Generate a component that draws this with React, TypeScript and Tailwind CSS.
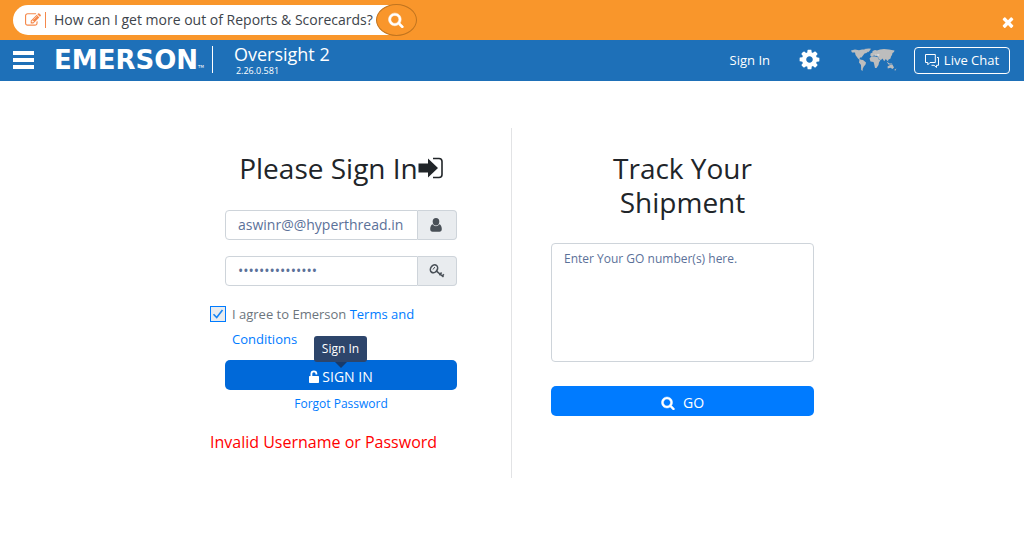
import React from "react";

const FA_SEARCH =
  "M1216 832q0-185-131.5-316.5t-316.5-131.5-316.5 131.5-131.5 316.5 131.5 316.5 316.5 131.5 316.5-131.5 131.5-316.5zm512 832q0 52-38 90t-90 38q-54 0-90-38l-343-342q-179 124-399 124-143 0-273.5-55.5t-225-150-150-225-55.5-273.5 55.5-273.5 150-225 225-150 273.5-55.5 273.5 55.5 225 150 150 225 55.5 273.5q0 220-124 399l343 343q37 37 37 90z";
const FA_TIMES =
  "M1490 1322q0 40-28 68l-136 136q-28 28-68 28t-68-28l-294-294-294 294q-28 28-68 28t-68-28l-136-136q-28-28-28-68t28-68l294-294-294-294q-28-28-28-68t28-68l136-136q28-28 68-28t68 28l294 294 294-294q28-28 68-28t68 28l136 136q28 28 28 68t-28 68l-294 294 294 294q28 28 28 68z";
const FA_COG =
  "M1152 896q0-106-75-181t-181-75-181 75-75 181 75 181 181 75 181-75 75-181zm512-109v222q0 12-8 23t-20 13l-185 28q-19 54-39 91 35 50 107 138 10 12 10 25t-9 23q-27 37-99 108t-94 71q-12 0-26-9l-138-108q-44 23-91 38-16 136-29 186-7 28-36 28h-222q-14 0-24.5-8.5t-11.5-21.5l-28-184q-49-16-90-37l-141 107q-10 9-25 9-14 0-25-11-126-114-165-168-7-10-7-23 0-12 8-23 15-21 51-66.5t54-70.5q-27-50-41-99l-183-27q-13-2-21-12.5t-8-23.5v-222q0-12 8-23t19-13l186-28q14-46 39-92-40-57-107-138-10-12-10-24 0-10 9-23 26-36 98.5-107.5t94.5-71.5q13 0 26 10l138 107q44-23 91-38 16-136 29-186 7-28 36-28h222q14 0 24.5 8.5t11.5 21.5l28 184q49 16 90 37l142-107q9-9 24-9 13 0 25 10 129 119 165 170 7 8 7 22 0 12-8 23-15 21-51 66.5t-54 70.5q26 50 41 98l183 28q13 2 21 12.5t8 23.5z";
const FA_EDIT =
  "M888 1184l116-116-152-152-116 116v56h96v96h56zm440-720q-16-16-33 1l-350 350q-17 17-1 33t33-1l350-350q17-17 1-33zm80 594v190q0 119-84.5 203.5t-203.5 84.5h-832q-119 0-203.5-84.5t-84.5-203.5v-832q0-119 84.5-203.5t203.5-84.5h832q63 0 117 25 15 7 18 23 3 17-9 29l-49 49q-14 14-32 8-23-6-45-6h-832q-66 0-113 47t-47 113v832q0 66 47 113t113 47h832q66 0 113-47t47-113v-126q0-13 9-22l64-64q15-15 35-7t20 29zm-96-738l288 288-672 672h-288v-288zm444 132l-92 92-288-288 92-92q28-28 68-28t68 28l152 152q28 28 28 68t-28 68z";

function Glyph({ d, className }: { d: string; className: string }) {
  return (
    <svg viewBox="0 0 1792 1792" className={className} fill="currentColor" aria-hidden="true">
      <path d={d} />
    </svg>
  );
}

function WorldMap() {
  return (
    <svg viewBox="0 0 46 24" className="h-6 w-[46px]" fill="#bdbdbd" aria-hidden="true">
      <path d="M0 2.500 4 1.600 8 2.200 11 1.600 15 1.500 17 3 15.500 5 13.500 5.500 12 7.500 10.500 9.500 9 9.500 8.500 11 10.500 12.500 9.500 12.500 7 10.500 4.500 7 4 4.500 1 4.500z" />
      <path d="M13 1 18 .4 20 .8 18.500 3 16.800 4.500 16 3z" />
      <path d="M8.500 11.500 12 12 15 14.500 14.500 16.500 12.800 18.500 11.800 20.500 11.500 23 10.200 22 10 17 8 14.500z" />
      <path d="M18.500 10.500 20.500 8.300 24 8.400 27 9.300 28 12 29.500 12 28 14.500 27.500 17 25.500 20 24 20 23 15.500 22.500 14 19.500 13.500z" />
      <path d="M19.300 7.800 19.500 5.500 21.500 4.500 21.500 3 24 2 26 2.600 29 1.600 33 1 38 1.600 43.500 2.400 43 4 41.500 5 41 7 40 8.500 39.500 10.500 37 12 37.500 13.500 36 12.500 34.800 11 33.200 13.300 31.500 10.500 30 12 28 11.500 27 8.800 25 7.800 23 7.500 21 8.500z" />
      <path d="M35.500 13.500 38.500 15.500 41 15.500 41.500 16.500 37.500 16.500z" />
      <path d="M36.500 18.500 39 17 41.500 16.800 43 19.500 41.500 21 39.500 19.800 36.800 20.500zM43.500 21.500 45.500 20.500 44 23z" />
      <path d="M23.500 7 25.500 6.500 25 7.600zM26 6.600 28.500 6.400 28 7.600 26.400 7.500z" fill="#f1f1f1" />
    </svg>
  );
}

const inputClass =
  "h-[30px] w-full min-w-0 flex-1 rounded-l border border-[#ced4da] bg-white px-3 pb-0.5 text-sm text-[#5b7199] outline-none placeholder:text-[#6c757d]";
const addonClass =
  "flex h-[30px] w-[39px] items-center justify-center rounded-r border border-l-0 border-[#ced4da] bg-[#e9ecef] pr-0.5 text-[#495057]";

export default function App() {
  return (
    <div className="min-h-screen bg-white font-['Open_Sans','Noto_Sans',sans-serif] text-[#212529]">
      <div className="flex h-10 items-center justify-between bg-[#f9962b] pr-2 pl-[13px]">
        <form className="flex items-center" onSubmit={(e) => e.preventDefault()}>
          <div className="flex h-[30px] w-[383px] items-center rounded-l-full bg-white pl-3 text-[#f5894c]">
            <Glyph d={FA_EDIT} className="h-4 w-4" />
            <span className="ml-1 h-4 w-px bg-[#f5894c]" />
            <input
              aria-label="Search help"
              defaultValue="How can I get more out of Reports & Scorecards?"
              className="ml-2 w-[328px] bg-transparent text-sm text-[#3d444b] outline-none"
            />
          </div>
          <button
            type="submit"
            aria-label="Search"
            className="-ml-5 flex h-8 w-[41px] items-center justify-center rounded-[50%] border border-[#c0741f] bg-[#f9962b] pr-0.5 text-white"
          >
            <Glyph d={FA_SEARCH} className="h-4 w-4 stroke-current stroke-[60]" />
          </button>
        </form>
        <button type="button" aria-label="Close" className="mt-1 text-white">
          <Glyph d={FA_TIMES} className="h-4 w-4" />
        </button>
      </div>

      <header className="flex h-[41px] items-center bg-[#1e70b8] pr-[14px] pl-[13px] pb-0.5 text-white">
        <button type="button" aria-label="Menu" className="flex w-[21px] flex-col gap-[3px]">
          <span className="h-[4px] w-full bg-white" />
          <span className="h-[4px] w-full bg-white" />
          <span className="h-[4px] w-full bg-white" />
        </button>
        <a href="#home" className="ml-5 flex items-end font-['DejaVu_Sans',sans-serif] text-[26px] leading-[30px] font-bold">
          EMERSON<span className="mb-1 text-[4px] leading-[8px] font-normal">TM</span>
        </a>
        <span className="ml-2 h-[27px] w-px bg-white" />
        <div className="ml-[21px] flex flex-col pb-[3px]">
          <span className="text-lg leading-6">Oversight 2</span>
          <span className="ml-0.5 text-[9px] leading-[9px]">2.26.0.581</span>
        </div>
        <nav className="ml-auto flex items-center pt-0.5">
          <a href="#signin" className="text-[13px]">Sign In</a>
          <button type="button" aria-label="Settings" className="ml-7 pb-0.5">
            <Glyph d={FA_COG} className="h-[23px] w-[23px]" />
          </button>
          <button type="button" aria-label="Region" className="ml-[30px] pb-0.5">
            <WorldMap />
          </button>
          <button
            type="button"
            className="ml-[17px] flex h-[27px] w-24 items-center justify-center gap-[5px] rounded border border-white text-[13px]"
          >
            <svg viewBox="0 0 14 14" className="h-[14px] w-[14px]" fill="none" stroke="currentColor" aria-hidden="true">
              <path d="M.5.5h9.800v8H5L2.800 10.800V8.500H.5z" />
              <path d="M12 3.500h1.500v7.800h-2v2.200l-2.400-2.200H6.500" />
            </svg>
            Live Chat
          </button>
        </nav>
      </header>

      <main className="mx-auto grid max-w-[636px] gap-x-[39px] px-4 pt-[47px] sm:grid-cols-[262fr_1px_263fr]">
        <form className="pt-[23px] pb-6" onSubmit={(e) => e.preventDefault()}>
          <h1 className="flex items-center justify-center text-[28px] leading-[34px]">
            Please Sign In
            <svg viewBox="0 0 25 22" className="h-[22px] w-[25px]" fill="currentColor" aria-hidden="true">
              <path d="M.5 6.500H10V1.500L20 11 10 20.500V15.500H.5z" />
              <path d="M15 1.500h6a3 3 0 0 1 3 3v13a3 3 0 0 1-3 3H15" fill="none" stroke="currentColor" strokeWidth="1.600" />
            </svg>
          </h1>
          <div className="px-[15px] pt-[25px]">
            <div className="flex">
              <input aria-label="Username" defaultValue="aswinr@@hyperthread.in" className={inputClass} />
              <span className={addonClass}>
                <svg viewBox="0 0 12 14" className="h-[14px] w-3" fill="currentColor" aria-hidden="true">
                  <ellipse cx="6" cy="3.800" rx="3.300" ry="3.700" />
                  <path d="M2.800 6.300C1 6.700.2 9 .2 11c0 1.800.9 2.800 2.300 2.800h7c1.400 0 2.300-1 2.300-2.800 0-2-.8-4.300-2.600-4.700C8.500 7.600 7.300 8.300 6 8.300S3.500 7.600 2.800 6.300z" />
                </svg>
              </span>
            </div>
            <div className="mt-4 flex">
              <input aria-label="Password" type="password" defaultValue="passwordpasswor" className={inputClass} />
              <span className={addonClass}>
                <svg viewBox="0 0 16 14" className="ml-0.5 h-[14px] w-4" fill="none" stroke="currentColor" aria-hidden="true">
                  <ellipse cx="5" cy="4.800" rx="3.300" ry="4.200" strokeWidth="1.600" transform="rotate(35 5 4.800)" />
                  <path d="M7.200 6.800 14.500 13M12.600 8.600 10.400 11.200M14.800 10.200 13.200 12.200" strokeWidth="1.600" />
                  <path d="M5.800 3 4 5.500" strokeWidth="1" />
                </svg>
              </span>
            </div>
          </div>
          <div className="mt-4 flex items-start text-[13px] leading-[25px] text-[#6c757d]">
            <span className="relative mt-1 h-4 w-4 shrink-0">
              <input
                id="agree"
                type="checkbox"
                defaultChecked
                className="peer block h-4 w-4 appearance-none border border-[#007bff] bg-[#e9ecef]"
              />
              <svg viewBox="0 0 16 16" className="pointer-events-none absolute inset-0 hidden h-4 w-4 peer-checked:block" fill="none" stroke="#1685f5" strokeWidth="1.600" aria-hidden="true">
                <path d="M3.500 8.200 6.700 11.500 12.500 4" />
              </svg>
            </span>
            <p className="ml-1.5 max-w-[210px]">
              <label htmlFor="agree">I agree to Emerson </label>
              <a href="#terms" className="text-[#007bff]">Terms and Conditions</a>
            </p>
          </div>
          <div className="relative mt-2 px-[15px]">
            <div
              role="tooltip"
              className="absolute bottom-7 left-1/2 -ml-[27px] h-[26px] w-[53px] rounded-[3px] bg-[#2d456b] text-center text-xs leading-[26px] text-white"
            >
              Sign In
              <svg viewBox="0 0 12 6" className="absolute top-[26px] left-[21px] h-[6px] w-3" fill="#173a6b" aria-hidden="true">
                <path d="M0 0h12L6 6z" />
              </svg>
            </div>
            <button type="submit" className="flex h-[30px] w-full items-center justify-center gap-[3px] rounded-[5px] bg-[#0069d9] pt-1 text-sm text-white">
              <svg viewBox="0 0 10 13" className="mb-0.5 h-[13px] w-[10px]" fill="currentColor" aria-hidden="true">
                <path d="M.7 6H1.500V3.800a3.400 3.400 0 0 1 6.800 0v.7H6.500v-.7a1.600 1.600 0 0 0-3.200 0V6h5.900a.8.8 0 0 1 .8.8v5.400a.8.8 0 0 1-.8.8H.8a.8.8 0 0 1-.8-.8V6.800A.8.8 0 0 1 .7 6z" />
              </svg>
              SIGN IN
            </button>
          </div>
          <p className="mt-1 text-center text-xs leading-5">
            <a href="#forgot" className="text-[#007bff]">Forgot Password</a>
          </p>
          <p role="alert" className="mt-4 text-base leading-6 text-[#ff0000]">Invalid Username or Password</p>
        </form>

        <div className="bg-[#e2e3e5]" />

        <form className="pt-[23px] pb-6" onSubmit={(e) => e.preventDefault()}>
          <h2 className="mx-auto max-w-[200px] text-center text-[28px] leading-[34px]">Track Your Shipment</h2>
          <textarea
            aria-label="GO numbers"
            placeholder="Enter Your GO number(s) here."
            className="mt-6 block h-[119px] w-full resize-none rounded border border-[#ced4da] px-3 py-1.5 text-xs leading-[18px] outline-none placeholder:text-[#5b7199]"
          />
          <button type="submit" className="mt-6 flex h-[30px] w-full items-center justify-center gap-2 rounded-[5px] bg-[#007bff] pt-1 text-sm text-white">
            <Glyph d={FA_SEARCH} className="h-[14px] w-[14px] stroke-current stroke-[60]" />
            GO
          </button>
        </form>
      </main>
    </div>
  );
}
